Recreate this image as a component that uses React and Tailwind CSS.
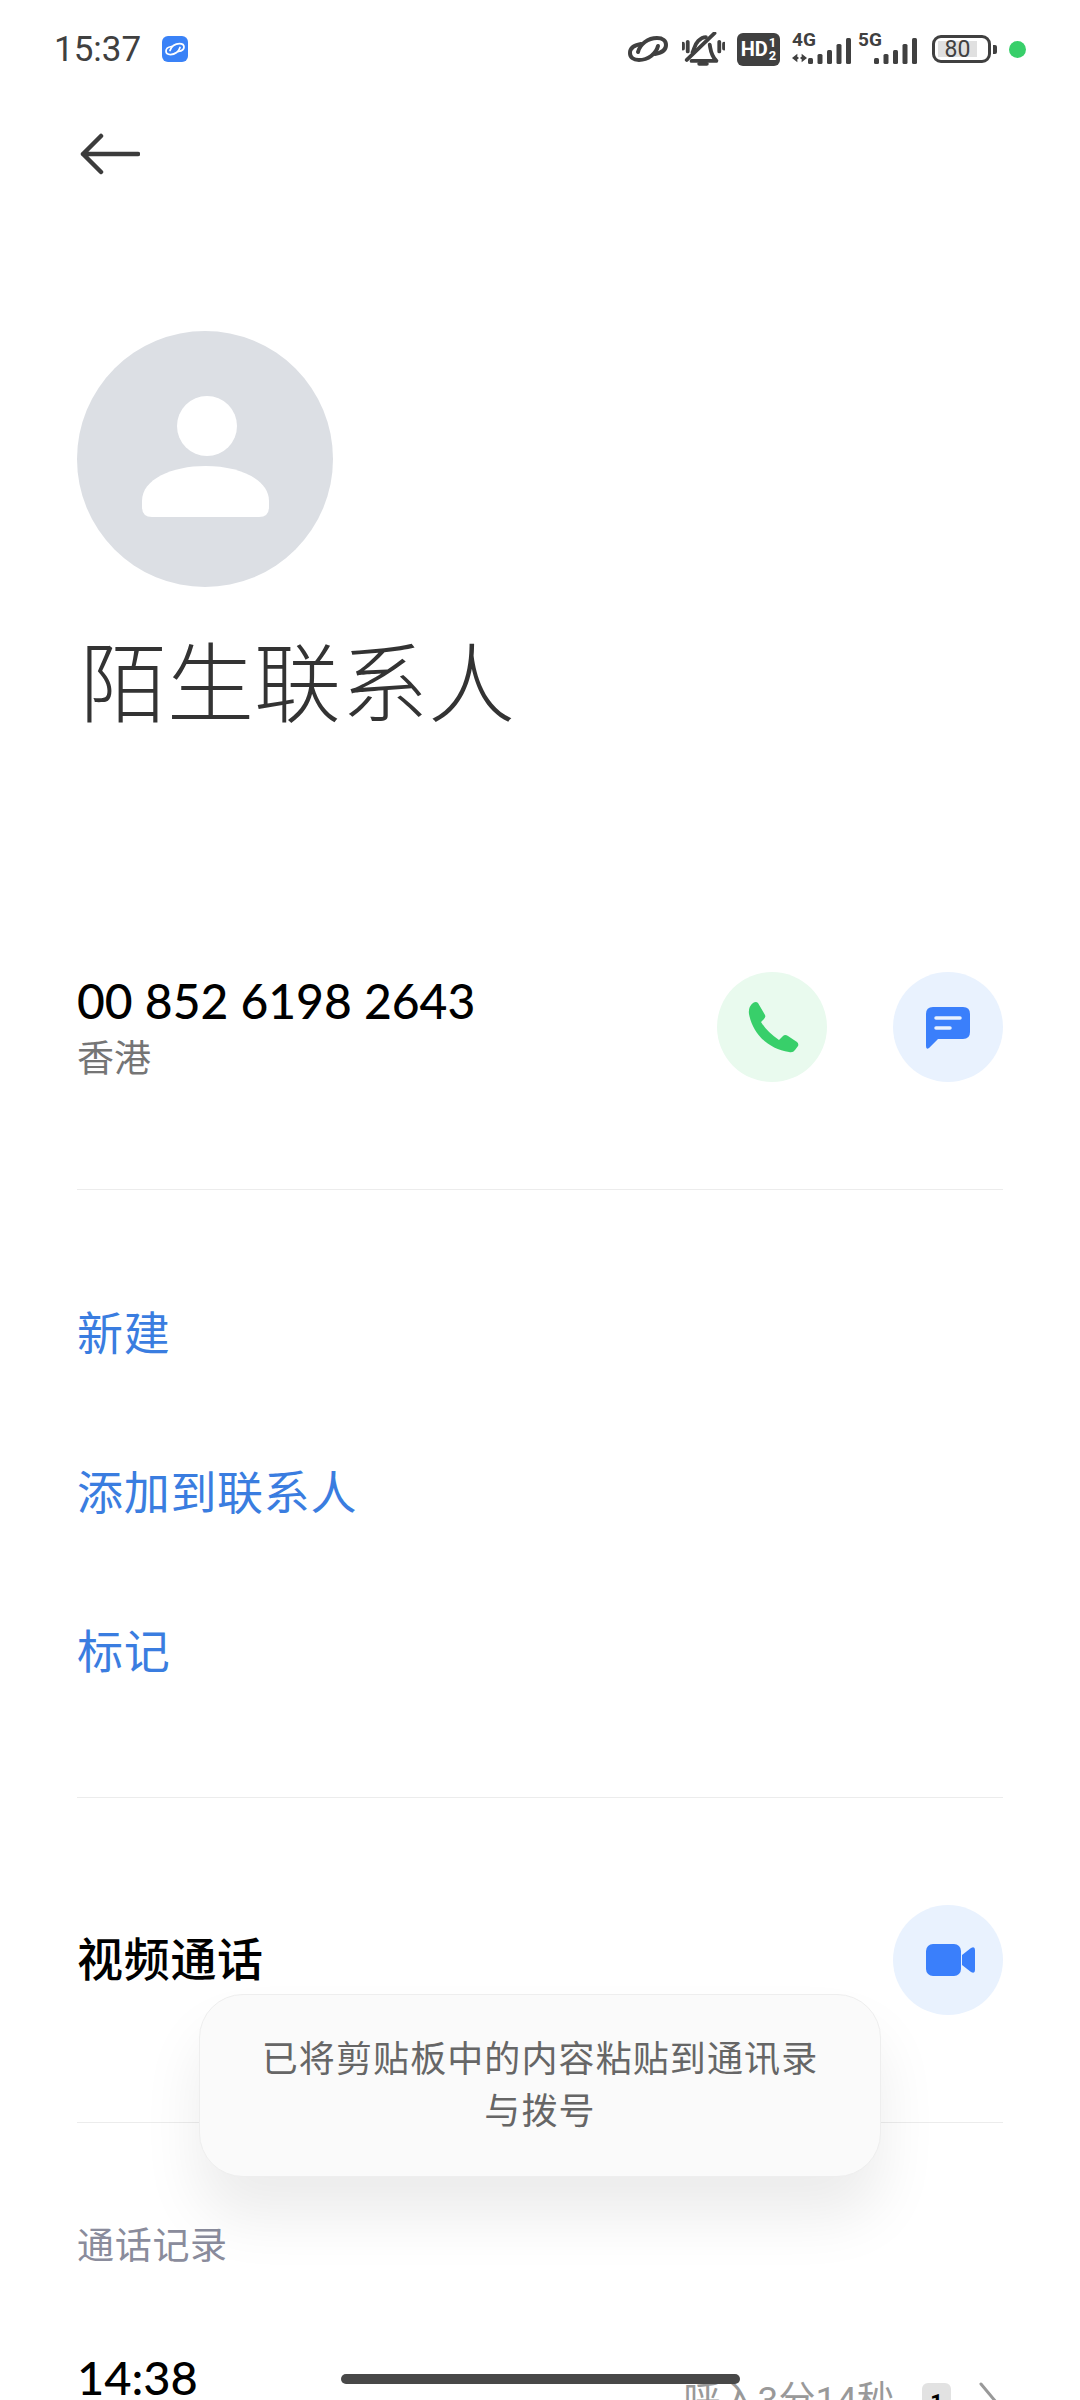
const actions = ['新建', '添加到联系人', '标记'];

function LinkGlyph({ className, strokeWidth = 4 }) {
  return (
    <svg viewBox="0 0 40 28" fill="none" stroke="currentColor" strokeWidth={strokeWidth} strokeLinecap="round" className={className}>
      <path d="M10 17C12 9 20 3 29 3C35 3 38 6 38 10C38 15 33 18 27 19" />
      <path d="M30 11C28 19 20 25 11 25C5 25 2 22 2 18C2 13 7 10 13 9" />
    </svg>
  );
}

function MutedBell() {
  return (
    <svg viewBox="0 0 45 35" fill="none" stroke="#404040" strokeWidth="4" strokeLinecap="round" strokeLinejoin="round" className="h-[34px] w-[43px]">
      <path d="M1 12v5M6 10v10M39 10v10M44 12v5" />
      <path d="M11 21c2-4 2-8 6-12 2-2 5-4 8-4" />
      <path d="M29 13c1 5 1 11 7 17H10" />
      <path d="M5 29L34 1" />
      <path d="M18 33h8" />
    </svg>
  );
}

function Bars({ className }) {
  return (
    <svg viewBox="0 0 44 26" fill="#404040" className={className}>
      <rect x="0" y="20" width="5" height="6" rx="1.500" />
      <rect x="9.500" y="16" width="5" height="10" rx="1.500" />
      <rect x="19" y="12" width="5" height="14" rx="1.500" />
      <rect x="28.500" y="6" width="5" height="20" rx="1.500" />
      <rect x="38" y="0" width="5" height="26" rx="1.500" />
    </svg>
  );
}

function StatusBar() {
  return (
    <div className="flex h-[98px] items-center justify-between pl-[54px] pr-[54px] text-[#404040]">
      <div className="flex items-center">
        <span className="text-[35px] leading-none">15:37</span>
        <span className="ml-[21px] grid h-[26px] w-[26px] place-items-center rounded-[6px] bg-[#3a82f7] text-white">
          <LinkGlyph className="h-[14px] w-[20px]" strokeWidth={3.5} />
        </span>
      </div>
      <div className="flex items-center">
        <LinkGlyph className="h-[28px] w-[40px]" />
        <span className="ml-[14px]"><MutedBell /></span>
        <span className="ml-[12px] flex h-[33px] w-[43px] items-center justify-center gap-[1px] rounded-[6px] bg-[#404040] font-bold text-white">
          <span className="text-[20px] leading-none">HD</span>
          <span className="flex flex-col text-center text-[13px] leading-[13px]">
            <span>1</span>
            <span>2</span>
          </span>
        </span>
        <span className="relative ml-[12px] h-[32px] w-[60px]">
          <span className="absolute left-0 top-[-3px] text-[19px] font-bold leading-[20px]">4G</span>
          <svg viewBox="0 0 14 8" fill="#404040" className="absolute bottom-[2px] left-0 h-[10px] w-[15px]">
            <path d="M0 4L5 0v3h1v2H5v3Z" />
            <path d="M14 4L9 0v3H8v2h1v3Z" />
          </svg>
          <Bars className="absolute bottom-[1px] right-0 h-[26px] w-[44px]" />
        </span>
        <span className="relative ml-[6px] h-[32px] w-[60px]">
          <span className="absolute left-0 top-[-3px] text-[19px] font-bold leading-[20px]">5G</span>
          <Bars className="absolute bottom-[1px] right-0 h-[26px] w-[44px]" />
        </span>
        <span className="ml-[14px] flex items-center gap-[2px]">
          <span className="relative flex h-[28px] w-[59px] items-center rounded-[9px] border-[3px] border-[#404040] pl-[3px]">
            <span className="flex h-[16px] w-[39px] items-center justify-center bg-[#e0e0e0] text-[23px] leading-none">80</span>
          </span>
          <span className="h-[9px] w-[4px] rounded-r-[2px] bg-[#404040]" />
        </span>
        <span className="ml-[12px] h-[17px] w-[17px] rounded-full bg-[#38cf6a]" />
      </div>
    </div>
  );
}

function RoundAction({ tint, children }) {
  return (
    <svg viewBox="0 0 110 110" className="h-[110px] w-[110px]">
      <circle cx="55" cy="55" r="55" fill={tint} />
      {children}
    </svg>
  );
}

export default function App() {
  return (
    <div className="relative h-[2400px] w-[1080px] overflow-hidden bg-white font-['Roboto','Noto_Sans_CJK_SC',sans-serif]">
      <StatusBar />

      <div className="px-[77px]">
        {/* back */}
        <svg viewBox="0 0 60 42" fill="none" stroke="#3c3c3c" strokeWidth="4.5" strokeLinecap="round" strokeLinejoin="round" className="ml-[3px] mt-[35px] h-[42px] w-[60px]">
          <path d="M58 21H3M21 3L3 21L21 39" />
        </svg>

        {/* avatar */}
        <svg viewBox="0 0 256 256" className="mt-[156px] h-[256px] w-[256px]">
          <circle cx="128" cy="128" r="128" fill="#dcdfe4" />
          <circle cx="130" cy="95" r="30" fill="#fff" />
          <path d="M65 170C65 148 95 135 128.500 135C162 135 192 148 192 170V176Q192 186 182 186H75Q65 186 65 176Z" fill="#fff" />
        </svg>

        <div className="ml-[3px] mt-[49px] h-[100px] text-[87px] font-light leading-[100px] text-[#333333]">陌生联系人</div>

        {/* number */}
        <div className="mt-[236px] flex h-[110px] justify-between">
          <div className="pt-[1px]">
            <div className="font-['Lato','Roboto',sans-serif] text-[48px] font-medium leading-[56px] text-black">00 852 6198 2643</div>
            <div className="mt-[7px] text-[37px] leading-[48px] text-[#757575]">香港</div>
          </div>
          <div className="flex gap-[66px]">
            <RoundAction tint="#e9faee">
              <path d="M36 31Q39 29 41 31L48 43Q49 45 47 47L44 50Q50 60 62 68L66 64Q68 62 71 64L80 70Q82 72 81 74L78 78Q76 81 72 80C52 77 36 63 32 42Q31 35 36 31Z" fill="#38cf6a" />
            </RoundAction>
            <RoundAction tint="#e9f2fe">
              <path d="M33 42Q33 35 40 35H70Q77 35 77 42V60Q77 67 70 67H45L36 76Q33 78 33 74Z" fill="#3a7ffb" />
              <path d="M43 46H67M43 56H57" stroke="#e9f2fe" strokeWidth="3.500" strokeLinecap="round" />
            </RoundAction>
          </div>
        </div>

        <div className="mt-[107px] h-px bg-[#ececec]" />

        <div className="mt-[65px] flex flex-col">
          {actions.map((label) => (
            <div key={label} className="flex h-[159px] items-center text-[46px] tracking-[0.7px] text-[#3a7de0]">{label}</div>
          ))}
        </div>

        <div className="mt-[65px] h-px bg-[#ececec]" />

        <div className="mt-[107px] flex h-[110px] items-center justify-between">
          <span className="text-[46px] font-medium tracking-[0.7px] text-black">视频通话</span>
          <RoundAction tint="#e9f2fe">
            <rect x="33" y="39" width="35" height="32" rx="7" fill="#3a7ffb" />
            <path d="M69 50L78 43Q82 41 82 45V65Q82 69 78 67L69 60Z" fill="#3a7ffb" />
          </RoundAction>
        </div>

        <div className="mt-[107px] h-px bg-[#ececec]" />

        <div className="mt-[99px] text-[37px] leading-[50px] tracking-[0.7px] text-[#8a8c9c]">通话记录</div>

        {/* latest call, cut off by the bottom of the screen */}
        <div className="mt-[77px] flex justify-between">
          <span className="font-['Lato','Roboto',sans-serif] text-[47px] font-medium leading-[56px] text-black">14:38</span>
          <div className="mt-[27px] flex items-start text-[#999999]">
            <span className="text-[37px] leading-[50px]">呼入3分14秒</span>
            <span className="ml-[28px] mt-[7px] flex h-[40px] w-[29px] justify-center rounded-[6px] bg-[#e2e2e2] text-[22px] font-bold leading-[40px] text-black">1</span>
            <svg viewBox="0 0 24 60" fill="none" stroke="#999999" strokeWidth="3" strokeLinecap="round" strokeLinejoin="round" className="ml-[28px] mt-[6px] h-[60px] w-[24px]">
              <path d="M2 2L22 26L2 50" />
            </svg>
          </div>
        </div>
      </div>

      {/* toast */}
      <div className="absolute left-[199px] top-[1994px] flex h-[183px] w-[682px] items-center justify-center rounded-[44px] border border-[#eeeeee] bg-[#fafafa] px-[60px] text-center text-[36px] leading-[52px] tracking-[1.1px] text-[#666666] shadow-[0_40px_60px_rgba(0,0,0,0.08)]">
        已将剪贴板中的内容粘贴到通讯录与拨号
      </div>

      {/* gesture handle */}
      <div className="absolute left-[341px] top-[2374px] h-[10px] w-[399px] rounded-full bg-[#484848]" />
    </div>
  );
}
